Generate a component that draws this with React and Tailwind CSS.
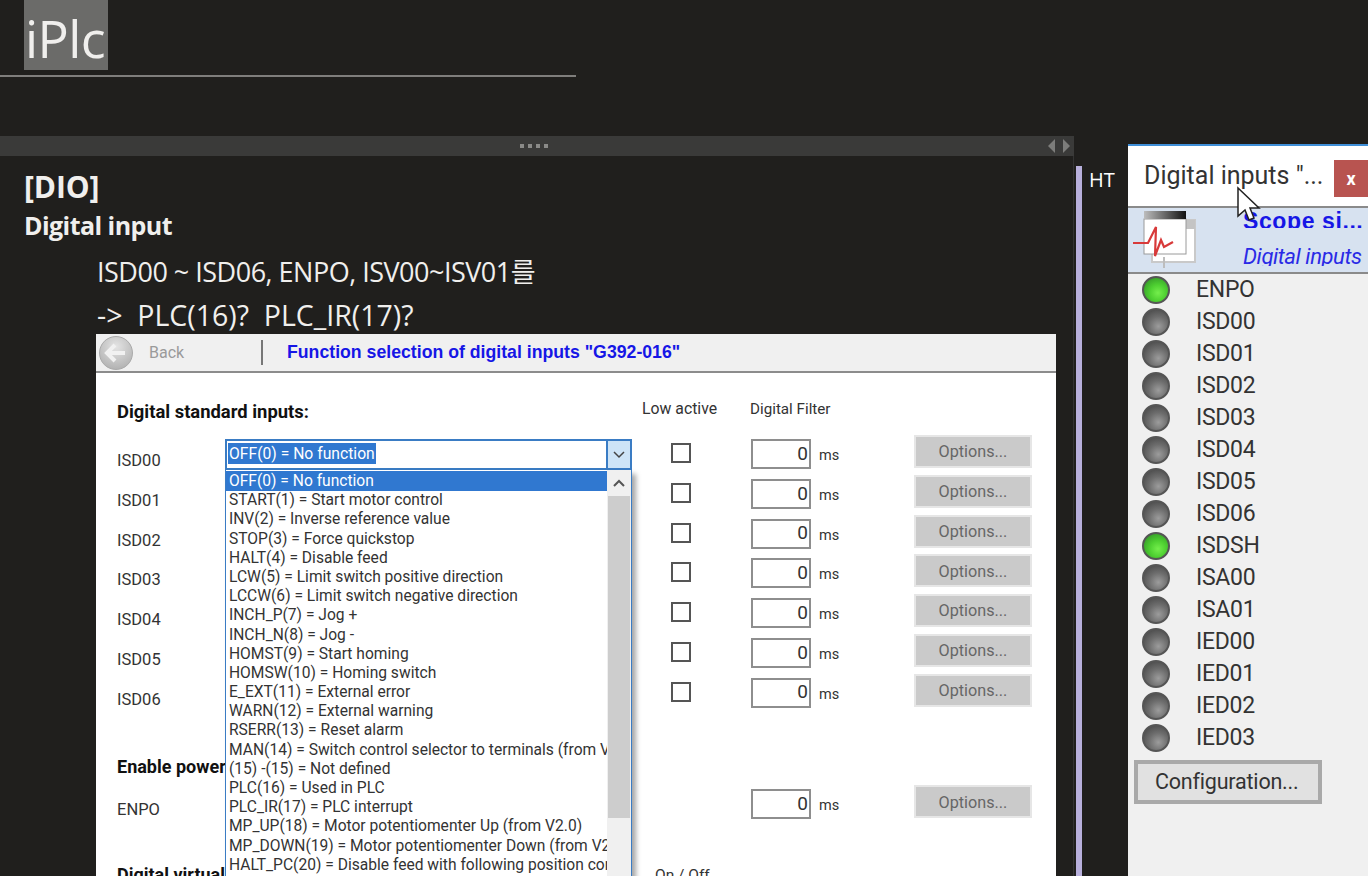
import React from "react";

const sans = "font-['Open_Sans','Noto_Sans_CJK_KR',sans-serif]";
const win = "font-['Roboto','Liberation_Sans',sans-serif]";

const items = [
  "OFF(0) = No function","START(1) = Start motor control","INV(2) = Inverse reference value","STOP(3) = Force quickstop","HALT(4) = Disable feed","LCW(5) = Limit switch positive direction","LCCW(6) = Limit switch negative direction","INCH_P(7) = Jog +","INCH_N(8) = Jog -","HOMST(9) = Start homing","HOMSW(10) = Homing switch","E_EXT(11) = External error","WARN(12) = External warning","RSERR(13) = Reset alarm","MAN(14) = Switch control selector to terminals (from V1.5)","(15) -(15) = Not defined","PLC(16) = Used in PLC","PLC_IR(17) = PLC interrupt","MP_UP(18) = Motor potentiomenter Up (from V2.0)","MP_DOWN(19) = Motor potentiomenter Down (from V2.0)","HALT_PC(20) = Disable feed with following position control",
];
const rows = ["ISD00","ISD01","ISD02","ISD03","ISD04","ISD05","ISD06"];
const leds = [["ENPO",1],["ISD00",0],["ISD01",0],["ISD02",0],["ISD03",0],["ISD04",0],["ISD05",0],["ISD06",0],["ISDSH",1],["ISA00",0],["ISA01",0],["IED00",0],["IED01",0],["IED02",0],["IED03",0]];

function Controls({ check = true }) {
  return (
    <>
      <div className="w-[20px] ml-[446px] mt-[4px] shrink-0">
        {check && <div className="w-[20px] h-[20px] border-2 border-[#555] bg-white" />}
      </div>
      <div className="ml-[60px] w-[60px] h-[30px] shrink-0 border-2 border-[#8e8e8e] flex items-center justify-end pr-[1px] text-[19px] text-[#333]">0</div>
      <div className="w-[103px] pl-[8px] pt-[6px] text-[14.5px] text-[#333] shrink-0">ms</div>
      <div className="w-[118px] h-[33px] -mt-[4px] pt-[2px] shrink-0 bg-[#cacaca] border-2 border-[#e6e6e6] flex items-center justify-center text-[16.2px] text-[#666]">Options...</div>
    </>
  );
}

function Led({ on }) {
  return (
    <div className={`w-[28px] h-[28px] rounded-full border-2 border-[#555] shrink-0 ${on ? "bg-[radial-gradient(circle_at_58%_62%,#74ee4c_0%,#4ed031_40%,#2c8526_100%)]" : "bg-[radial-gradient(circle_at_60%_68%,#9c9c9c_0%,#6c6c6c_45%,#3f3f3f_100%)]"}`} />
  );
}

export default function App() {
  return (
    <div className={`w-[1368px] h-[876px] overflow-hidden bg-[#201f1d] flex ${sans}`}>
      {/* left column */}
      <div className="w-[1074px] shrink-0 flex flex-col h-full">
        <div className="h-[136px] shrink-0">
          <div className="w-[576px] h-[77px] border-b-2 border-[#7f7e7c]">
            <div className="ml-[24px] w-[84px] h-[70px] bg-[#6b6b69] text-[#f0efed] font-normal text-[52px] leading-[64px] pt-[6px] tracking-[-0.6px] pl-[1px]">iPlc</div>
          </div>
        </div>
        <div className="h-[20px] shrink-0 bg-[#3a3a39] flex items-center">
          <div className="ml-[520px] flex gap-[4px]">
            {[0,1,2,3].map(i => <span key={i} className="w-[4px] h-[4px] bg-[#8a8a88]" />)}
          </div>
          <svg className="ml-auto mr-[2px]" width="24" height="14" viewBox="0 0 24 14">
            <path d="M7 0 L0 7 L7 14 Z" fill="#7d7d7b" />
            <path d="M15 0 L22 7 L15 14 Z" fill="#7d7d7b" />
          </svg>
        </div>
        <div className="flex-1 min-h-0 border-r border-[#333] pt-[12px] text-[#f0efed] overflow-hidden">
          <div className="pl-[24px] text-[30px] font-bold leading-[38px] tracking-[-0.1px]">[DIO]</div>
          <div className="pl-[24px] text-[25px] font-bold leading-[34px] mt-[2px] tracking-[-0.55px]">Digital input</div>
          <div className="pl-[97px] text-[27px] leading-[44px] mt-[8px] tracking-[-0.5px] font-normal whitespace-nowrap">ISD00 ~ ISD06, ENPO, ISV00~ISV01를</div>
          <div className="pl-[97px] text-[28.5px] leading-[42px] -mb-[2px] tracking-[0px] whitespace-pre">{"->  PLC(16)?  PLC_IR(17)?"}</div>
          {/* form */}
          <div className={`relative ml-[96px] w-[960px] h-[542px] bg-white text-[#222] ${win} overflow-hidden`}>
            <div className="h-[39px] bg-[#f0f0f0] border-b-2 border-[#8c8c8c] flex items-center">
              <div className="ml-[3px] w-[34px] h-[34px] rounded-full bg-[radial-gradient(circle_at_50%_30%,#e4e4e4,#a8a8a8)] border border-[#aaa] flex items-center justify-center">
                <svg width="24" height="22" viewBox="0 0 24 22"><path d="M11 3 L3 11 L11 19 M3 11 H21" stroke="#f1f1f1" strokeWidth="4" fill="none" /></svg>
              </div>
              <span className="ml-[16px] w-[36px] text-[16px] text-[#9a9a9a]">Back</span>
              <div className="ml-[76px] w-[2px] h-[25px] bg-[#777]" />
              <span className="ml-[24px] text-[17.7px] font-bold text-[#1616e6] font-['Liberation_Sans',sans-serif] whitespace-nowrap">Function selection of digital inputs "G392-016"</span>
            </div>
            <div className="pl-[21px]">
              <div className="h-[66px] flex pt-[25px] text-[#333]">
                <div className="w-[525px] text-[18.4px] font-bold leading-[28px] text-[#111] whitespace-nowrap">Digital standard inputs:</div>
                <div className="w-[108px] text-[15.8px] leading-[22px]">Low active</div>
                <div className="text-[15.2px] leading-[22px]">Digital Filter</div>
              </div>
              {rows.map(r => (
                <div key={r} className="h-[39.75px] flex items-start">
                  <div className="w-[108px] pt-[9px] text-[16.5px] leading-[26px] text-[#333] shrink-0 -mb-2">{r}</div>
                  <Controls />
                </div>
              ))}
              <div className="h-[60px] pt-[37px] text-[18px] font-bold text-[#111] leading-[26px] whitespace-nowrap">Enable power stage</div>
              <div className="h-[56px] flex items-start pt-[12px]">
                <div className="w-[108px] pt-[8px] text-[16.5px] leading-[26px] text-[#333] shrink-0 -mb-2">ENPO</div>
                <Controls check={false} />
              </div>
              <div className="h-[60px] flex pt-[29px] text-[#111]">
                <div className="w-[538px] text-[18px] font-bold leading-[26px] whitespace-nowrap">Digital virtual inputs:</div>
                <div className="text-[15.5px] text-[#333] leading-[26px]">On / Off</div>
              </div>
            </div>
            {/* opened combo box */}
            <div className="absolute left-[129px] top-[105px] w-[407px]">
              <div className="h-[31px] bg-white border-2 border-[#3a7cc4] flex">
                <div className="flex-1 pl-[1px] pt-[1px]">
                  <span className="bg-[#3078d0] text-white text-[15.7px] leading-[21px] px-[1px] inline-block">OFF(0) = No function</span>
                </div>
                <div className="w-[24px] bg-[#cde4f7] border-l-2 border-[#3a7cc4] flex items-center justify-center">
                  <svg width="12" height="8" viewBox="0 0 12 8"><path d="M1 1 L6 6 L11 1" stroke="#444" strokeWidth="1.5" fill="none" /></svg>
                </div>
              </div>
              <div className="h-[420px] bg-white border-x border-[#3a7cc4] flex shadow-[4px_4px_5px_rgba(0,0,0,0.35)]">
                <div className="w-[381px] overflow-hidden pt-[1px]">
                  {items.map((t, i) => (
                    <div key={t} className={`leading-[19.2px] pl-[3px] whitespace-nowrap text-[15.6px] ${i === 0 ? "bg-[#3078d0] text-white h-[20.2px] pt-[1px]" : "text-[#333] h-[19.2px]"}`}>{t}</div>
                  ))}
                </div>
                <div className="w-[24px] bg-[#f0f0f0] flex flex-col">
                  <div className="h-[26px] flex items-center justify-center">
                    <svg width="12" height="8" viewBox="0 0 12 8"><path d="M1 7 L6 2 L11 7" stroke="#555" strokeWidth="2" fill="none" /></svg>
                  </div>
                  <div className="h-[322px] bg-[#cdcdcd] mx-[1px]" />
                </div>
              </div>
            </div>
          </div>
        </div>
      </div>

      {/* HT column */}
      <div className="w-[54px] shrink-0 pt-[166px] flex pl-[2px]">
        <div className="w-[6px] h-full bg-[#b8b0dc] shrink-0" />
        <div className="pl-[7px] text-[20px] leading-[28px] text-white">HT</div>
      </div>

      {/* digital inputs window */}
      <div className={`relative w-[240px] mt-[144px] bg-[#f0f0f0] border-t-2 border-[#3f8fd8] ${win} overflow-hidden`}>
        <div className="h-[60px] bg-white flex items-start">
          <div className="pl-[16px] pt-[13px] w-[206px] text-[25px] leading-[34px] text-[#333] whitespace-nowrap">Digital inputs "...</div>
          <div className="mt-[14px] w-[34px] h-[37px] bg-[#b85450] text-white font-bold text-[18px] flex items-center justify-center">x</div>
        </div>
        <div className="h-[68px] bg-[#d7e2f0] border-y-2 border-[#8a8a8a] flex overflow-hidden">
          <svg className="shrink-0 mt-[2px] ml-[3px]" width="68" height="62" viewBox="0 0 68 62">
            <defs>
              <linearGradient id="bar" x1="0" x2="1" y1="0" y2="0">
                <stop offset="0" stopColor="#bdbdbd" />
                <stop offset="1" stopColor="#111" />
              </linearGradient>
            </defs>
            <rect x="21" y="10" width="43" height="42" fill="#fff" stroke="#c9c9c9" strokeWidth="2" />
            <rect x="55" y="10" width="9" height="9" fill="#c4c4c4" />
            <rect x="13" y="9" width="42" height="35" fill="#fff" stroke="#9a9a9a" />
            <rect x="13" y="1" width="42" height="8" fill="url(#bar)" />
            <path d="M33 47 V58" stroke="#bdbdbd" strokeWidth="2" />
            <path d="M2 33 H17 L25 17 L24 46 L30 30 L33 37 L42 32" stroke="#d83a3a" strokeWidth="2.2" fill="none" />
          </svg>
          <div className="pl-[44px] flex flex-col shrink-0">
            <div className="h-[20px] font-['Liberation_Sans',sans-serif] font-bold text-[#1616e6] text-[23px] leading-[26px] overflow-hidden whitespace-nowrap tracking-[0.6px]">Scope si...</div>
            <div className="mt-[19px] h-[19px] overflow-hidden italic text-[#2a2ae6] text-[22px] leading-[20px] whitespace-nowrap tracking-[-0.4px]">Digital inputs</div>
          </div>
        </div>
        <div className="pl-[14px] flex flex-col">
          {leds.map(([n, on]) => (
            <div key={n} className="h-[32px] flex items-center">
              <Led on={on} />
              <span className="ml-[26px] text-[23px] text-[#333] tracking-[-0.3px]">{n}</span>
            </div>
          ))}
        </div>
        <div className="ml-[6px] mt-[6px] w-[188px] h-[44px] bg-[#e1e1e1] border-[4px] border-[#a9a9a9] text-[21.5px] text-[#333] flex items-center pl-[17px] tracking-[-0.2px]">Configuration...</div>
        {/* mouse cursor */}
        <svg className="absolute left-[108px] top-[40px]" width="26" height="38" viewBox="0 0 26 38">
          <path d="M2 2 V30 L9 24 L13 34 L18 32 L14 22 L23 22 Z" fill="#fff" stroke="#222" strokeWidth="1.5" />
        </svg>
      </div>
    </div>
  );
}
